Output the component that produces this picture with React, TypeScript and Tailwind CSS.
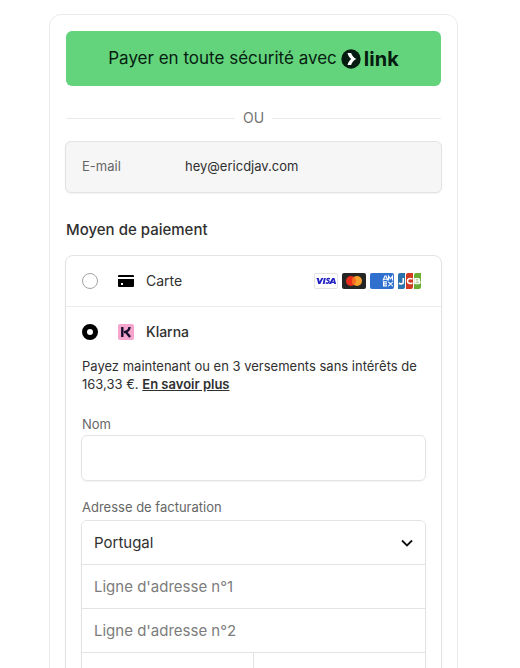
const inter = "font-['Inter','Liberation_Sans',sans-serif]";

function LinkLogo() {
  return (
    <span className="flex items-center gap-[3px] text-xl leading-5 font-bold">
      <svg viewBox="0 0 20 20" className="size-5" aria-hidden="true">
        <circle cx="10" cy="10" r="9.700" fill="#061c10" />
        <path d="M6.500 4h3.600c.8 2.600 2.600 4.700 5.300 6-2.700 1.300-4.500 3.400-5.300 6H6.500c.6-2.500 1.900-4.500 3.700-6-1.800-1.500-3.100-3.500-3.700-6z" fill="#fff" />
      </svg>
      link
    </span>
  );
}

function CardBrands() {
  return (
    <div className="mr-[3px] flex items-center gap-1" aria-hidden="true">
      <svg viewBox="0 0 24 16" className="h-4 w-6">
        <rect x=".5" y=".5" width="23" height="15" rx="1.500" fill="#fff" stroke="#e3e3e3" />
        <g fill="#2424c4">
          <path d="M2 5h2.800l.8 3.600L7.400 5h2L6.300 11H4.200L3 6z" />
          <path d="M9.900 5h1.900l-1.200 6H8.700z" />
          <path d="M18.300 5h2.200l1.600 6h-1.900l-.2-1h-2.300l-.6 1h-2.200zM19.400 6.700l-1 2h1.400z" />
        </g>
        <path d="M16 5.900c-2-.8-3.200 0-2.800.9.400.7 2 .8 1.900 2-.1 1.400-1.900 1.600-3.400 1" fill="none" stroke="#2424c4" strokeWidth="1.500" />
      </svg>
      <svg viewBox="0 0 24 16" className="h-4 w-6">
        <rect width="24" height="16" rx="2" fill="#252525" />
        <circle cx="9" cy="8" r="5" fill="#eb2c1b" />
        <circle cx="15" cy="8" r="5" fill="#f5a02c" />
        <path d="M12 4a5 5 0 0 1 0 8 5 5 0 0 1 0-8z" fill="#f56a1e" />
      </svg>
      <svg viewBox="0 0 24 16" className="h-4 w-6">
        <rect width="24" height="16" rx="2" fill="#2f70cf" />
        <g fill="none" stroke="#fff" strokeWidth="1.100">
          <path d="M13 7.500l2-4.500h1l2 4.500M14 6.200h3M18.500 7.500V3.200l2 2.600 2-2.600v4.300" />
          <path d="M17 8.900h-3.500v4H17M13.500 10.900H17M18.300 8.800l4.500 4.300M22.800 8.800l-4.500 4.300" />
        </g>
      </svg>
      <svg viewBox="0 0 24 16" className="h-4 w-6">
        <path d="M2 0h5v14a2 2 0 0 1-2 2H0V2a2 2 0 0 1 2-2z" fill="#2b72ac" />
        <path d="M10 0h5v14a2 2 0 0 1-2 2H8V2a2 2 0 0 1 2-2z" fill="#d23a20" />
        <path d="M18 0h5v14a2 2 0 0 1-2 2h-5V2a2 2 0 0 1 2-2z" fill="#69ad35" />
        <g fill="none" stroke="#fff" strokeWidth="1.600">
          <path d="M5.300 5v4.200c0 2-3 2-4.500 1.100M14.500 6c-2.500-1-5-.5-5 2s2.500 3 5 2M17 5.700h3.200c1.600 0 1.600 2.300 0 2.300H17h3.500c1.900 0 1.900 2.400 0 2.400H17z" />
        </g>
      </svg>
    </div>
  );
}

const radio =
  "size-4 shrink-0 appearance-none rounded-full border border-[#a3a3a3] bg-white checked:border-[5px] checked:border-black";
const field = "h-[43px] w-full bg-white px-3 text-[15px] text-[#303030] placeholder:text-[#7c7c7c] outline-none";

export default function App() {
  return (
    <div className={`${inter} h-screen overflow-y-auto bg-white pt-[14px] pr-[62px] pl-[49px] text-[#303030] [scrollbar-width:none]`}>
      <main className="rounded-xl border border-[#ebebeb] px-[15px] py-4">
        <div className="px-px">
          <button type="button" className="flex h-[55px] w-full items-center justify-center gap-1 rounded-md bg-[#63d47c] text-[17px] text-[#061c10]">
            <span>Payer en toute sécurité avec</span>
            <LinkLogo />
          </button>
        </div>

        <div className="mt-[22px] flex h-5 items-center gap-2 px-px text-sm text-[#737373]">
          <span className="h-px flex-1 bg-[#ebebeb]" />
          OU
          <span className="h-px flex-1 bg-[#ebebeb]" />
        </div>

        <form>
          <div className="mt-[13px] flex h-[52px] items-center rounded-md border border-[#e3e3e3] bg-[#f6f6f6] px-4 shadow-xs">
            <label htmlFor="email" className="w-[103px] text-[13px] text-[#666666]">E-mail</label>
            <input id="email" type="email" readOnly defaultValue="hey@ericdjav.com" className="min-w-0 flex-1 bg-transparent text-[13px] outline-none" />
          </div>

          <h2 className="mt-[25px] px-px text-[15px] leading-6 font-medium">Moyen de paiement</h2>

          <div className="mt-[13px] rounded-lg border border-[#e3e3e3] shadow-xs">
            <label className="flex h-[51px] items-center border-b border-[#ebebeb] px-4 text-sm">
              <input type="radio" name="method" className={radio} />
              <svg viewBox="0 0 16 12" className="ml-5 h-3 w-4" aria-hidden="true">
                <path d="M1 0h14a1 1 0 0 1 1 1v1H0V1a1 1 0 0 1 1-1zM0 4h16v7a1 1 0 0 1-1 1H1a1 1 0 0 1-1-1zM3 8v2h2V8z" fill="#000" />
              </svg>
              <span className="ml-3 flex-1">Carte</span>
              <CardBrands />
            </label>

            <div className="px-[15px] pb-4">
              <label className="flex h-[50px] items-center px-px text-sm font-medium">
                <input type="radio" name="method" defaultChecked className={radio} />
                <svg viewBox="0 0 16 16" className="ml-5 size-4" aria-hidden="true">
                  <rect width="16" height="16" rx="2" fill="#f6a5cd" />
                  <path d="M4.300 3v10M11.500 3c0 2.600-2.300 4.700-5.500 5.200M7.500 7.500l4.600 5.500" fill="none" stroke="#160d2d" strokeWidth="2.400" />
                </svg>
                <span className="ml-3">Klarna</span>
              </label>

              <p className="px-px text-[13px] leading-[18px]">
                Payez maintenant ou en 3 versements sans intérêts de 163,33&nbsp;€.{" "}
                <a href="#klarna" className="font-semibold underline">En savoir plus</a>
              </p>

              <label htmlFor="name" className="mt-[21px] block px-px text-[13px] leading-5 text-[#666666]">Nom</label>
              <input id="name" type="text" className="mt-px block h-[46px] w-full rounded-md border border-[#e3e3e3] px-3 text-[15px] shadow-xs outline-none" />

              <fieldset className="mt-4">
                <legend className="px-px text-[13px] leading-5 text-[#666666]">Adresse de facturation</legend>
                <div className="mt-[3px] divide-y divide-[#e3e3e3] overflow-hidden rounded-md border border-[#e3e3e3] shadow-xs">
                  <div className="relative">
                    <select aria-label="Pays" className={`${field} block appearance-none pt-[2px]`}>
                      <option>Portugal</option>
                    </select>
                    <svg viewBox="0 0 12 8" className="pointer-events-none absolute top-[18px] right-3 h-2 w-3" aria-hidden="true">
                      <path d="M1 1.500l5 5 5-5" fill="none" stroke="#111" strokeWidth="1.800" />
                    </svg>
                  </div>
                  <div><input aria-label="Ligne d'adresse n°1" placeholder="Ligne d'adresse n°1" className={`${field} block`} /></div>
                  <div><input aria-label="Ligne d'adresse n°2" placeholder="Ligne d'adresse n°2" className={`${field} block`} /></div>
                  <div className="grid grid-cols-2 divide-x divide-[#e3e3e3]">
                    <input aria-label="Code postal" placeholder="Code postal" className={field} />
                    <input aria-label="Ville" placeholder="Ville" className={field} />
                  </div>
                </div>
              </fieldset>
            </div>
          </div>
        </form>
      </main>
    </div>
  );
}
